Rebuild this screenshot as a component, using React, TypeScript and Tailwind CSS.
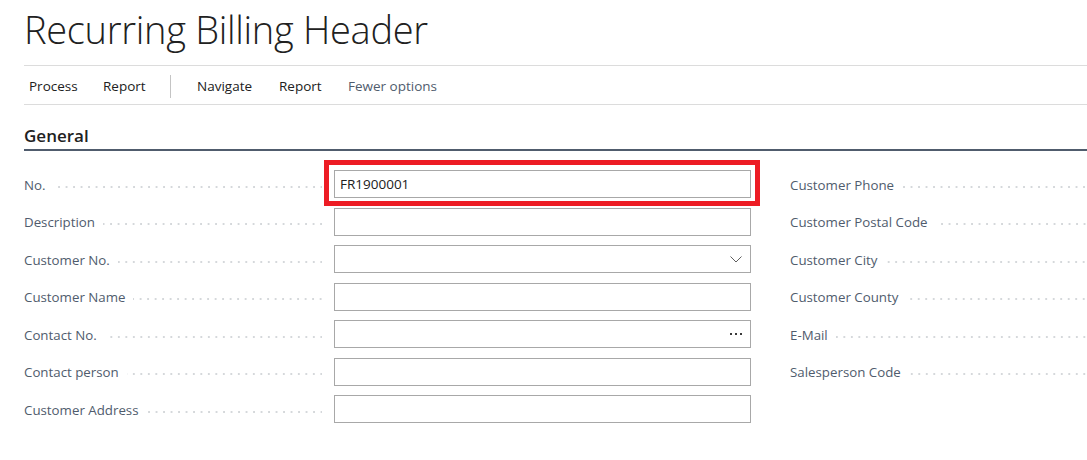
const font = "font-['Open_Sans','Noto_Sans',sans-serif]";

const leftRows = [
  { label: "No.", value: "FR1900001", kind: "text", highlight: true },
  { label: "Description", value: "", kind: "text" },
  { label: "Customer No.", value: "", kind: "select" },
  { label: "Customer Name", value: "", kind: "text" },
  { label: "Contact No.", value: "", kind: "lookup" },
  { label: "Contact person", value: "", kind: "text" },
  { label: "Customer Address", value: "", kind: "text" },
];

const rightRows = [
  "Customer Phone",
  "Customer Postal Code",
  "Customer City",
  "Customer County",
  "E-Mail",
  "Salesperson Code",
];

function Leader() {
  return (
    <div className="flex-1 ml-[8px] mt-[2px] h-[2px] bg-[linear-gradient(to_right,transparent_5.5px,#d5d8db_5.5px)] bg-[length:7.5px_2px] bg-repeat-x bg-right" />
  );
}

function Chevron() {
  return (
    <svg width="12" height="7" viewBox="0 0 12 7" className="text-[#5f5f5f]">
      <path d="M0.5 0.5 L6 6 L11.5 0.5" fill="none" stroke="currentColor" strokeWidth="1" />
    </svg>
  );
}

function Ellipsis() {
  return (
    <div className="flex gap-[3px] items-center">
      <span className="w-[2px] h-[2px] bg-[#3a3a3a]" />
      <span className="w-[2px] h-[2px] bg-[#3a3a3a]" />
      <span className="w-[2px] h-[2px] bg-[#3a3a3a]" />
    </div>
  );
}

function Field({ value, kind, highlight }: { value: string; kind: string; highlight?: boolean }) {
  return (
    <div className="relative w-[417px] h-[28px]">
      <div className="w-full h-full border border-[#a8a8a8] bg-white flex items-center pl-[5px] pr-[8px]">
        <span className="flex-1 text-[13.5px] text-[#212121] pt-px">{value}</span>
        {kind === "select" && <Chevron />}
        {kind === "lookup" && <Ellipsis />}
      </div>
      {highlight && (
        <div className="absolute -left-[10px] -top-[10px] -right-[9px] -bottom-[8px] border-[5px] border-[#ed1c24] pointer-events-none" />
      )}
    </div>
  );
}

export default function App() {
  return (
    <div className={`w-[1087px] h-[460px] bg-white overflow-hidden pl-[24px] ${font}`}>
      <div className="h-[66px] border-b border-[#dcdcdc]">
        <h1 className="text-[38px] font-light text-[#212121] leading-none pt-[10px] tracking-[-0.3px]">
          Recurring Billing Header
        </h1>
      </div>

      <div className="h-[39px] border-b border-[#dcdcdc] flex items-center pt-[2px] text-[13.5px] text-[#212121]">
        <span className="w-[79px] pl-[5px]">Process</span>
        <span className="w-[67px]">Report</span>
        <span className="w-px h-[23px] bg-[#c4c4c4] mr-[26px]" />
        <span className="w-[82px]">Navigate</span>
        <span className="w-[69px]">Report</span>
        <span className="text-[#505c6d]">Fewer options</span>
      </div>

      <div className="mt-[17px] h-[29px] border-b-2 border-[#505c6d] flex items-start">
        <h2 className="text-[17px] font-semibold text-[#212121] leading-[28px]">General</h2>
      </div>

      <div className="flex mt-[19px]">
        <div className="flex flex-col w-[727px]">
          {leftRows.map((r) => (
            <div key={r.label} className="h-[37.5px] flex items-start">
              <div className="w-[298px] h-[28px] flex items-center pt-[3px]">
                <span className="text-[13.3px] text-[#505c6d] whitespace-nowrap">{r.label}</span>
                <Leader />
              </div>
              <div className="ml-[12px]">
                <Field value={r.value} kind={r.kind} highlight={r.highlight} />
              </div>
            </div>
          ))}
        </div>
        <div className="flex flex-col ml-[39px] w-[400px] shrink-0">
          {rightRows.map((l) => (
            <div key={l} className="h-[37.5px] flex items-start">
              <div className="w-full h-[28px] flex items-center pt-[3px]">
                <span className="text-[13.3px] text-[#505c6d] whitespace-nowrap">{l}</span>
                <Leader />
              </div>
            </div>
          ))}
        </div>
      </div>
    </div>
  );
}
